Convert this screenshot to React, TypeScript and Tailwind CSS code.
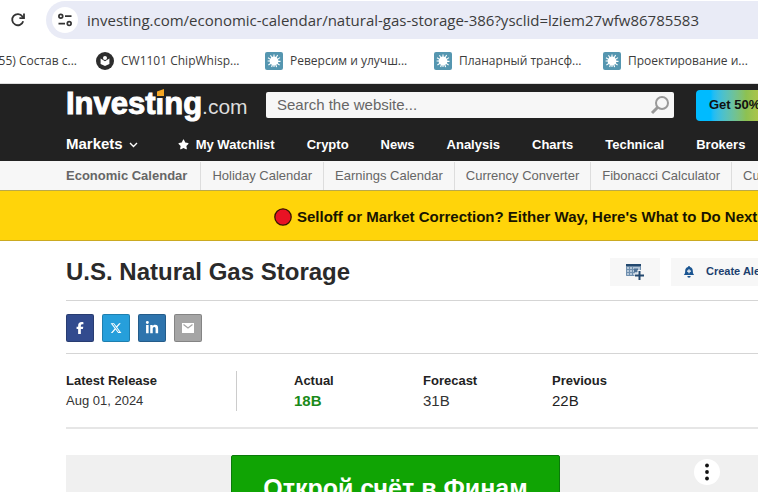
import type { ReactNode } from "react"
import { FaFacebookF, FaLinkedinIn, FaStar, FaXTwitter } from "react-icons/fa6"

type Release = {
  label: string
  value: string
  className: string
}

const bookmarks = ["Реверсим и улучш...", "Планарный трансф...", "Проектирование и..."]

const navItems = ["Crypto", "News", "Analysis", "Charts", "Technical", "Brokers"]

const subNavItems = [
  "Holiday Calendar",
  "Earnings Calendar",
  "Currency Converter",
  "Fibonacci Calculator",
  "Currency Calculator",
]

const releases: Release[] = [
  { label: "Actual", value: "18B", className: "font-bold text-[#1a8a1a]" },
  { label: "Forecast", value: "31B", className: "text-[#333]" },
  { label: "Previous", value: "22B", className: "text-[#222]" },
]

function ReloadIcon() {
  return (
    <svg width="16" height="16" viewBox="0 0 16 16" fill="none" stroke="#333" strokeWidth="1.8">
      <path d="M13.2 9.2A5.6 5.6 0 1 1 12.4 4.4L13.6 6" />
      <path d="M14 1.6V6.2H9.4" />
    </svg>
  )
}

function SiteSettingsIcon() {
  return (
    <svg width="16" height="16" viewBox="0 0 16 16" fill="none" stroke="#333" strokeWidth="1.7">
      <circle cx="3.8" cy="4.2" r="1.9" />
      <path d="M8 4.2h6.5M1.5 11.6H8" />
      <circle cx="12.2" cy="11.6" r="1.9" />
    </svg>
  )
}

function BookReaderIcon() {
  return (
    <svg className="shrink-0" width="18" height="18" viewBox="0 0 18 18">
      <circle cx="9" cy="9" r="9" fill="#2d2d2d" />
      <circle cx="9" cy="6" r="2" fill="#fff" />
      <path d="M4.6 6.6 9 9.2l4.4-2.6V12L9 14l-4.4-2z" fill="#fff" />
    </svg>
  )
}

function SplatIcon() {
  return (
    <svg className="shrink-0" width="18" height="18" viewBox="0 0 18 18">
      <rect width="18" height="18" rx="2" fill="#5596b0" />
      <circle cx="9" cy="9" r="4.4" fill="#fff" />
      <path
        d="M9 2.5V6M5.5 3.2 7 6M12.6 3 11 6M15 5.6 12 7.6M3 5.8l3 1.8M2.6 9H6M15.5 9.4H12M3.4 13 6.4 11M14.6 13l-3-2M6.6 15 7.6 12M11.6 15.2 10.6 12M9 15v-3"
        stroke="#fff"
        strokeWidth="1.1"
      />
    </svg>
  )
}

function BrowserBar() {
  return (
    <div className="bg-white font-['Open_Sans','Noto_Sans',sans-serif] text-[#3c3c3c]">
      <div className="flex items-center gap-5 pt-px pl-[10px]">
        <button type="button" aria-label="Reload">
          <ReloadIcon />
        </button>
        <div className="flex h-[38px] flex-1 items-center gap-2 rounded-l-full bg-[#e9ebf6] pl-[6px]">
          <button
            type="button"
            aria-label="Site information"
            className="flex size-[26px] shrink-0 items-center justify-center rounded-full bg-white"
          >
            <SiteSettingsIcon />
          </button>
          <input
            aria-label="Address"
            className="min-w-0 flex-1 bg-transparent pl-px text-[15px] outline-none"
            defaultValue="investing.com/economic-calendar/natural-gas-storage-386?ysclid=lziem27wfw86785583"
          />
        </div>
      </div>
      <div className="flex h-[45px] items-center gap-[19px] overflow-hidden border-b border-[#ddd] text-xs whitespace-nowrap">
        <a href="#" className="flex w-[77px] shrink-0 justify-end">
          55) Состав с...
        </a>
        <a href="#" className="flex w-[150px] shrink-0 items-center gap-[7px]">
          <BookReaderIcon />
          CW1101 ChipWhisp...
        </a>
        {bookmarks.map((title) => (
          <a key={title} href="#" className="flex w-[150px] shrink-0 items-center gap-[7px]">
            <SplatIcon />
            {title}
          </a>
        ))}
      </div>
    </div>
  )
}

function Logo() {
  return (
    <a href="#" className="flex items-baseline leading-8 text-white">
      <span className="text-[31px] font-bold [-webkit-text-stroke:1px_white]">
        Invest
        <span className="relative">
          i
          <svg className="absolute top-0 left-0" width="10" height="12" viewBox="0 0 10 12">
            <path d="M0 0h10v12H0z" fill="#222" />
            <path d="M1 5.5 8 3v7H1z" fill="#f5a623" />
          </svg>
        </span>
        ng
      </span>
      <span className="text-[21px] text-[#ddd]">.com</span>
    </a>
  )
}

function Header() {
  return (
    <header className="bg-[#222] pl-[66px] text-white">
      <div className="flex h-[42px] items-center whitespace-nowrap">
        <div className="w-[200px] shrink-0">
          <Logo />
        </div>
        <form className="flex h-[26px] w-[408px] shrink-0 items-center rounded-xs bg-[#f7f7f7] pr-1 pl-[11px]">
          <input
            type="text"
            aria-label="Search the website"
            placeholder="Search the website..."
            className="min-w-0 flex-1 bg-transparent text-[15px] text-[#333] outline-none placeholder:text-[#666]"
          />
          <button type="button" aria-label="Search">
            <svg width="20" height="20" viewBox="0 0 20 20" fill="none" stroke="#999">
              <circle cx="12" cy="8" r="6" strokeWidth="2" />
              <path d="M7.5 12.5 2 18" strokeWidth="3" />
            </svg>
          </button>
        </form>
        <button
          type="button"
          className="ml-[22px] h-[31px] shrink-0 rounded-sm bg-linear-to-r from-[#0bf] from-15% via-[#8cc152] via-50% to-[#fc0] px-[13px] text-[13px] font-bold text-[#111]"
        >
          Get 50% Off
        </button>
      </div>
      <nav className="flex h-[35px] items-center gap-8 pt-[2px] text-[13px] font-bold whitespace-nowrap">
        <a href="#" className="mr-2 flex items-center gap-[6px] text-[15px]">
          Markets
          <svg width="9" height="6" viewBox="0 0 9 6" fill="none" stroke="#fff" strokeWidth="1.4">
            <path d="M1 1l3.5 3.5L8 1" />
          </svg>
        </a>
        <a href="#" className="flex items-center gap-[7px]">
          <FaStar size={11} />
          My Watchlist
        </a>
        {navItems.map((item) => (
          <a key={item} href="#">
            {item}
          </a>
        ))}
      </nav>
    </header>
  )
}

function SubNav() {
  return (
    <nav className="flex h-[30px] items-center overflow-hidden border-b border-[#b9a84a] bg-[#f7f7f7] pt-px pl-[66px] text-[13px] whitespace-nowrap text-[#666]">
      <a href="#" className="pr-[13px] font-bold">
        Economic Calendar
      </a>
      {subNavItems.map((item) => (
        <a key={item} href="#" className="border-l border-[#ddd] px-[11px] leading-7">
          {item}
        </a>
      ))}
    </nav>
  )
}

function ShareButton({ label, className, children }: { label: string; className: string; children: ReactNode }) {
  return (
    <button
      type="button"
      aria-label={label}
      className={`flex size-7 items-center justify-center rounded-xs border border-black/20 text-white ${className}`}
    >
      {children}
    </button>
  )
}

function TitleRow() {
  return (
    <div className="flex h-[60px] items-center overflow-hidden border-b border-[#d5d5d5] pt-[2px] whitespace-nowrap">
      <h1 className="w-[544px] shrink-0 text-2xl font-bold text-[#2a2a2a]">U.S. Natural Gas Storage</h1>
      <button
        type="button"
        aria-label="Add to calendar"
        className="flex h-7 w-[50px] shrink-0 items-center justify-center bg-[#f7f7f7]"
      >
        <svg width="18" height="16" viewBox="0 0 18 16">
          <path d="M0 0h15v12H0z" fill="#b4c6d8" />
          <path d="M0 0h15v2.5H0z" fill="#23486f" />
          <path d="M.5 2.5v9H9M3.5 3v8M6.5 3v8M0 5.5h9M0 8.5h9M14.5 3v3" fill="none" stroke="#6f8fae" />
          <path d="M8 4.5h4V8H8z" fill="#4f7296" />
          <path d="M13.5 6v10M8.5 11.5H18" stroke="#f7f7f7" strokeWidth="4" />
          <path d="M13.5 7v9M9 11.5h9" stroke="#23486f" strokeWidth="2" />
        </svg>
      </button>
      <button
        type="button"
        className="ml-[11px] flex h-7 shrink-0 items-center gap-[11px] bg-[#f7f7f7] px-3 text-[11px] font-bold text-[#1c3f6e]"
      >
        <svg width="12" height="12" viewBox="0 0 12 12" fill="#1b5591">
          <path d="M6 0a1 1 0 0 1 1 1c2 .6 2.8 2 2.8 4 0 2 .5 3 1.4 4H.8c.9-1 1.4-2 1.4-4 0-2 .8-3.4 2.8-4a1 1 0 0 1 1-1z" />
          <path d="M4.3 10h3.4a1.7 1.7 0 0 1-3.4 0z" />
          <path d="M6 3.2v4M4 5.2h4" stroke="#f7f7f7" strokeWidth="1.2" />
        </svg>
        Create Alert
      </button>
    </div>
  )
}

function ShareRow() {
  return (
    <div className="flex h-[53px] items-center gap-2 border-b border-[#d5d5d5] pt-px">
      <ShareButton label="Share on Facebook" className="bg-[#324b8e]">
        <FaFacebookF size={12} />
      </ShareButton>
      <ShareButton label="Share on X" className="bg-[#269fdb]">
        <FaXTwitter size={12} />
      </ShareButton>
      <ShareButton label="Share on LinkedIn" className="bg-[#2e74ad]">
        <FaLinkedinIn size={14} />
      </ShareButton>
      <ShareButton label="Share by email" className="bg-[#a5a5a5]">
        <svg width="12" height="10" viewBox="0 0 12 10">
          <path d="M0 0h12v10H0z" fill="#fff" />
          <path d="M1.5 1.5 6 5l4.5-3.5" fill="none" stroke="#a5a5a5" strokeWidth="1.2" />
        </svg>
      </ShareButton>
    </div>
  )
}

function ReleaseRow() {
  return (
    <div className="flex h-[75px] items-center border-b-2 border-[#e6e6e6] whitespace-nowrap">
      <div className="h-10 w-[171px] shrink-0 border-r border-[#ccc] text-[13px] leading-5">
        <div className="font-bold text-[#222]">Latest Release</div>
        <div className="text-[#333]">Aug 01, 2024</div>
      </div>
      <dl className="ml-[57px] flex h-10">
        {releases.map(({ label, value, className }) => (
          <div key={label} className="w-[129px]">
            <dt className="text-[13px] leading-5 font-bold text-[#222]">{label}</dt>
            <dd className={`text-[15px] leading-5 ${className}`}>{value}</dd>
          </div>
        ))}
      </dl>
    </div>
  )
}

function AdBanner() {
  return (
    <div className="mt-[26px] flex h-[90px] bg-[#f0f0f0] pl-[165px]">
      <a
        href="#"
        className="w-[329px] shrink-0 rounded-xs border border-[#0a7a0a] bg-[#10a404] pt-[14px] text-center text-[25px] font-bold text-white"
      >
        Открой счёт в Финам
      </a>
      <button
        type="button"
        aria-label="Ad options"
        className="mt-1 ml-[134px] flex size-[26px] shrink-0 items-center justify-center rounded-full bg-white"
      >
        <svg width="4" height="18" viewBox="0 0 4 18" fill="#111">
          <circle cx="2" cy="2.5" r="1.9" />
          <circle cx="2" cy="9" r="1.9" />
          <circle cx="2" cy="15.5" r="1.9" />
        </svg>
      </button>
    </div>
  )
}

export default function App() {
  return (
    <div className="h-screen overflow-hidden bg-white font-['Liberation_Sans',Arial,sans-serif]">
      <BrowserBar />
      <Header />
      <SubNav />
      <a
        href="#"
        className="flex h-[50px] items-center gap-[5px] border-b border-[#cbaa20] bg-[#ffd40a] pt-[3px] pl-[274px] text-[15px] font-bold whitespace-nowrap text-[#181400]"
      >
        <svg className="shrink-0" width="18" height="18" viewBox="0 0 18 18">
          <circle cx="9" cy="9" r="8.2" fill="#e81224" stroke="#3a1500" strokeWidth="1.3" />
        </svg>
        Selloff or Market Correction? Either Way, Here's What to Do Next
      </a>
      <main className="pl-[66px]">
        <TitleRow />
        <ShareRow />
        <ReleaseRow />
        <AdBanner />
      </main>
    </div>
  )
}
